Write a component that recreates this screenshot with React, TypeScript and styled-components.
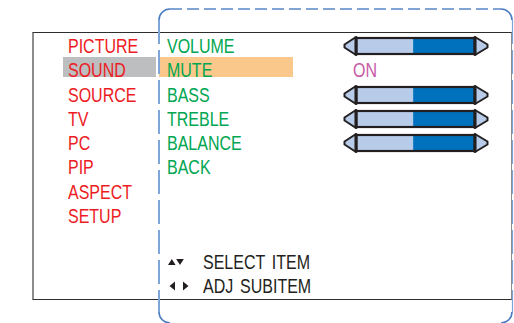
import React from "react";
import styled, { createGlobalStyle } from "styled-components";

const GlobalStyle = createGlobalStyle`
  html, body { margin: 0; padding: 0; background: #ffffff; }
  body { font-family: "Liberation Sans", Arial, sans-serif; }
`;

const Page = styled.div`
  position: relative;
  width: 514px;
  height: 323px;
  overflow: hidden;
  box-sizing: border-box;
  padding: 32px 0 0 32px;
`;

const Frame = styled.svg`
  position: absolute;
  left: 0;
  top: 0;
  pointer-events: none;
`;

const Box = styled.div`
  box-sizing: border-box;
  width: 480px;
  height: 268px;
  display: flex;
  border-top: 1px solid #2e2e2e;
  border-bottom: 1px solid #2e2e2e;
  border-left: 2px solid #8c8c8c;
  border-right: 1px solid #8c8c8c;
  font-size: 19.5px;
`;

/* The OSD font is a condensed grotesque: Arial metrics squeezed horizontally */
const Narrow = styled.span`
  display: inline-block;
  white-space: nowrap;
  transform: scaleX(0.82);
  transform-origin: 0 50%;
`;

const MenuColumn = styled.div`
  box-sizing: border-box;
  width: 125px;
  padding-left: 29px;
  padding-right: 3px;
  display: grid;
  grid-auto-rows: 24.3px;
  align-content: start;
`;

const MenuItem = styled.div<{ $active?: boolean }>`
  height: 20px;
  line-height: 26px;
  padding-left: 5px;
  color: #ed1c24;
  white-space: nowrap;
  background: ${(p) => (p.$active ? "#bcbec0" : "transparent")};
`;

const SubPanel = styled.div`
  flex: 1;
  display: flex;
  flex-direction: column;
`;

const SubRows = styled.div`
  display: grid;
  grid-auto-rows: 24.3px;
  align-content: start;
`;

const SubRow = styled.div`
  display: flex;
  align-items: flex-start;
`;

const SubLabel = styled.div<{ $active?: boolean }>`
  position: relative;
  box-sizing: border-box;
  width: 134px;
  height: 20px;
  line-height: 26px;
  padding-left: 8px;
  color: #00a651;
  white-space: nowrap;
  background: ${(p) => (p.$active ? "#fbc88b" : "transparent")};
`;

const ValueText = styled.div`
  margin-left: 60px;
  height: 20px;
  line-height: 26px;
  color: #c95aa6;
`;

const SliderWrap = styled.div`
  margin-left: 49px;
  margin-top: 2px;
  display: flex;
`;

const Help = styled.div`
  margin-top: auto;
  padding: 0 0 1px 9px;
  display: flex;
  flex-direction: column;
`;

const HelpLine = styled.div`
  display: flex;
  align-items: center;
  height: 24px;
  color: #231f20;
`;

const HelpIcon = styled.svg`
  flex: none;
  width: 22px;
  margin-right: 13px;
`;

const HelpText = styled(Narrow)`
  line-height: 24px;
  word-spacing: 3px;
`;

const Slider: React.FC<{ value: number }> = ({ value }) => {
  const x0 = 14;
  const x1 = 133;
  const split = x0 + (x1 - x0) * value;
  return (
    <svg width="148" height="22" viewBox="0 0 148 22">
      <polygon points="14,2 2.5,9.5 2.5,12.5 14,20" fill="#b8cce9" stroke="#231f20" strokeWidth="2" strokeLinejoin="round" />
      <polygon points="133,2 145.5,9.5 145.5,12.5 133,20" fill="#b8cce9" stroke="#231f20" strokeWidth="2" strokeLinejoin="round" />
      <rect x={x0} y={3} width={split - x0} height={16} fill="#b8cce9" />
      <rect x={split} y={3} width={x1 - split} height={16} fill="#0071bc" />
      <rect x={x0} y={3} width={x1 - x0} height={16} fill="none" stroke="#231f20" strokeWidth="2.2" />
      <rect x={12.5} y={1.5} width={3.2} height={19} rx={0.8} fill="#231f20" />
      <rect x={131.3} y={1.5} width={3.2} height={19} rx={0.8} fill="#231f20" />
    </svg>
  );
};

const UpDownIcon = () => (
  <HelpIcon height="8" viewBox="0 0 22 8">
    <polygon points="0,7 3.8,1 7.6,7" fill="#231f20" />
    <polygon points="8.2,1 15.8,1 12,7" fill="#231f20" />
  </HelpIcon>
);

const LeftRightIcon = () => (
  <HelpIcon height="10" viewBox="0 0 22 10">
    <polygon points="7,0.5 1.5,5 7,9.5" fill="#231f20" />
    <polygon points="15,0.5 20.5,5 15,9.5" fill="#231f20" />
  </HelpIcon>
);

const menu = ["PICTURE", "SOUND", "SOURCE", "TV", "PC", "PIP", "ASPECT", "SETUP"];

type Sub = { label: string; slider?: number; text?: string };
const subs: Sub[] = [
  { label: "VOLUME", slider: 0.48 },
  { label: "MUTE", text: "ON" },
  { label: "BASS", slider: 0.48 },
  { label: "TREBLE", slider: 0.48 },
  { label: "BALANCE", slider: 0.48 },
  { label: "BACK" },
];

export default function App() {
  return (
    <>
      <GlobalStyle />
      <Page>
        <Box>
          <MenuColumn>
            {menu.map((m) => (
              <MenuItem key={m} $active={m === "SOUND"}>
                <Narrow>{m}</Narrow>
              </MenuItem>
            ))}
          </MenuColumn>
          <SubPanel>
            <SubRows>
              {subs.map((s) => (
                <SubRow key={s.label}>
                  <SubLabel $active={s.label === "MUTE"}>
                    <Narrow>{s.label}</Narrow>
                  </SubLabel>
                  {s.slider !== undefined && (
                    <SliderWrap>
                      <Slider value={s.slider} />
                    </SliderWrap>
                  )}
                  {s.text && (
                    <ValueText>
                      <Narrow>{s.text}</Narrow>
                    </ValueText>
                  )}
                </SubRow>
              ))}
            </SubRows>
            <Help>
              <HelpLine>
                <UpDownIcon />
                <HelpText>SELECT ITEM</HelpText>
              </HelpLine>
              <HelpLine>
                <LeftRightIcon />
                <HelpText>ADJ SUBITEM</HelpText>
              </HelpLine>
            </Help>
          </SubPanel>
        </Box>
        <Frame width="514" height="323" viewBox="0 0 514 323">
          <g fill="none" strokeWidth="1.6">
            <path d="M159,20 A11,11 0 0 1 170,9" stroke="#4a7cc2" />
            <path d="M170,9 L501,9" stroke="#5a86c6" strokeDasharray="12 5" />
            <path d="M501,9 A11,11 0 0 1 512,20" stroke="#4a7cc2" />
            <path d="M159,20 L159,312" stroke="#7ea5d8" strokeWidth="2" strokeDasharray="24 6" />
            <path d="M512.5,20 L512.5,312" stroke="#7ea5d8" strokeWidth="1.2" strokeDasharray="24 6" />
            <path d="M159,312 A11,11 0 0 0 170,323" stroke="#4a7cc2" />
            <path d="M501,323 A11,11 0 0 0 512,312" stroke="#4a7cc2" />
          </g>
        </Frame>
      </Page>
    </>
  );
}
